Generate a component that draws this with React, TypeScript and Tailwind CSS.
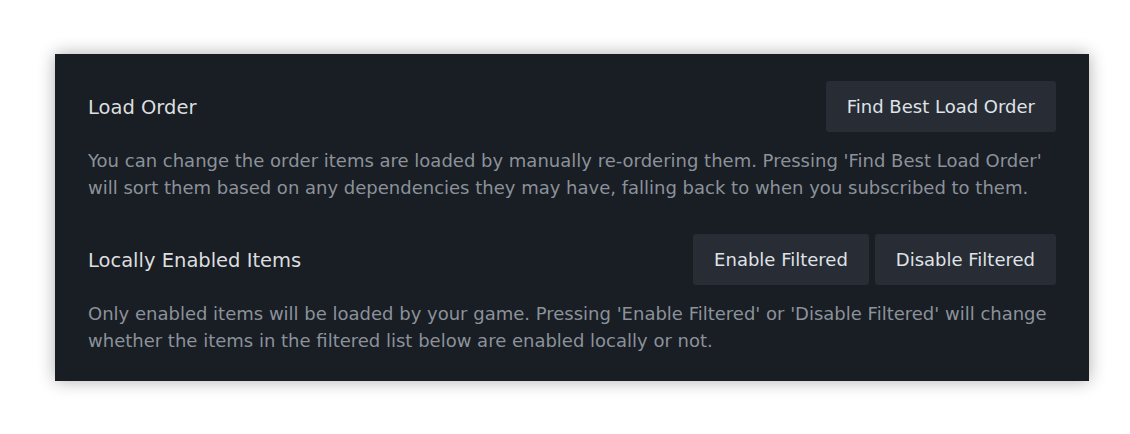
export default function App() {
  const btn =
    "h-[51px] px-[21px] rounded-[3px] bg-[#282c35] text-[#dfe3e6] text-[18px] hover:bg-[#323742]";

  return (
    <div className="min-h-screen bg-white pt-[54px] pl-[55px] font-['DejaVu_Sans',sans-serif]">
      <div className="w-[1034px] bg-[#191d24] px-[33px] pt-[27px] pb-[27px] shadow-[0_0_16px_rgba(0,0,0,0.32)]">
        <div className="flex items-center justify-between">
          <div className="pt-[2px] text-[19.5px] text-[#dcdedf]">Load Order</div>
          <button className={btn}>Find Best Load Order</button>
        </div>
        <p className="mt-[15px] text-[18px] leading-[27px] text-[#8b929a]">
          You can change the order items are loaded by manually re-ordering them. Pressing 'Find Best Load Order'
          will sort them based on any dependencies they may have, falling back to when you subscribed to them.
        </p>

        <div className="mt-[33px] flex items-center justify-between">
          <div className="pt-[2px] text-[19.5px] text-[#dcdedf]">Locally Enabled Items</div>
          <div className="flex gap-[6px]">
            <button className={btn}>Enable Filtered</button>
            <button className={btn}>Disable Filtered</button>
          </div>
        </div>
        <p className="mt-[15px] text-[18px] leading-[27px] text-[#8b929a]">
          Only enabled items will be loaded by your game. Pressing 'Enable Filtered' or 'Disable Filtered' will change
          whether the items in the filtered list below are enabled locally or not.
        </p>
      </div>
    </div>
  );
}
